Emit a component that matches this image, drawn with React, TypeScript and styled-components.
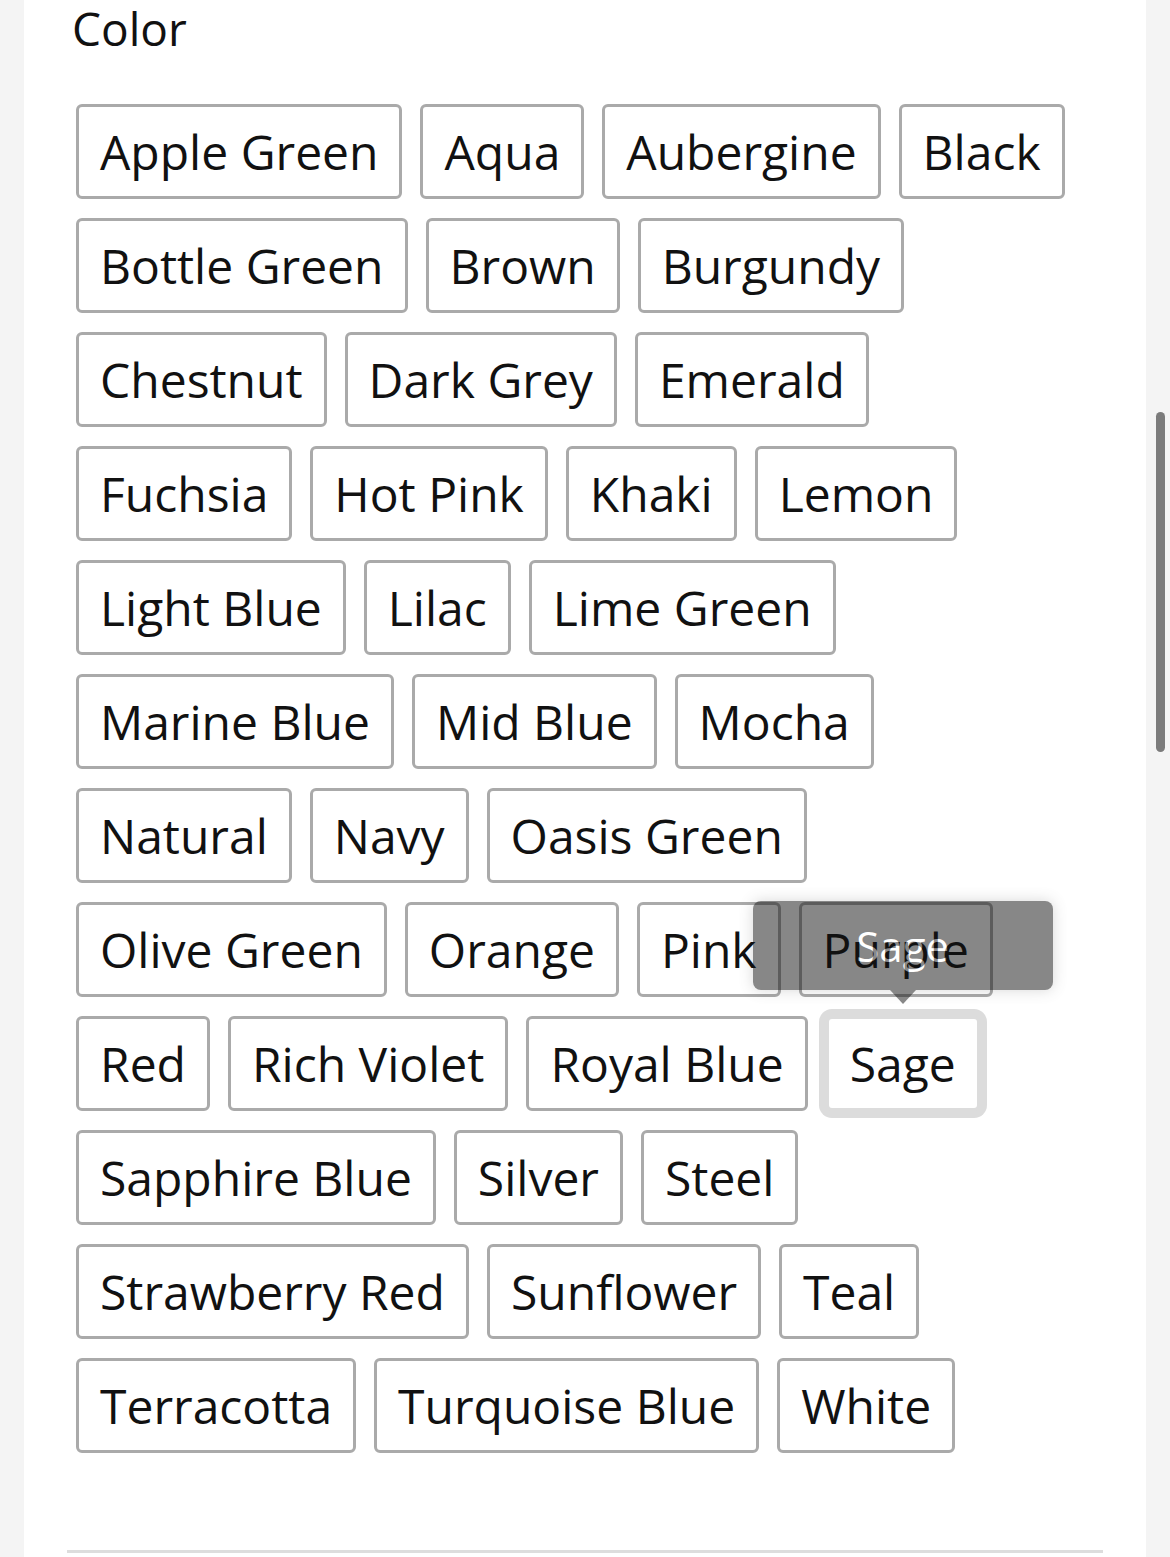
import React from 'react'
import styled, { createGlobalStyle } from 'styled-components'

const colors = [
    'Apple Green', 'Aqua', 'Aubergine', 'Black',
    'Bottle Green', 'Brown', 'Burgundy',
    'Chestnut', 'Dark Grey', 'Emerald',
    'Fuchsia', 'Hot Pink', 'Khaki', 'Lemon',
    'Light Blue', 'Lilac', 'Lime Green',
    'Marine Blue', 'Mid Blue', 'Mocha',
    'Natural', 'Navy', 'Oasis Green',
    'Olive Green', 'Orange', 'Pink', 'Purple',
    'Red', 'Rich Violet', 'Royal Blue', 'Sage',
    'Sapphire Blue', 'Silver', 'Steel',
    'Strawberry Red', 'Sunflower', 'Teal',
    'Terracotta', 'Turquoise Blue', 'White',
]

const selected = 'Sage'

const App = () => (
    <>
        <GlobalStyle />
        <Page>
            <Gutter />
            <Panel>
                <Title>Color</Title>
                <Swatches>
                    {colors.map((color) => (
                        <Option key={color} active={color === selected}>
                            {color}
                            {color === selected && <Tooltip>{color}</Tooltip>}
                        </Option>
                    ))}
                </Swatches>
                <Divider />
            </Panel>
            <Gutter>
                <ScrollThumb />
            </Gutter>
        </Page>
    </>
)

/* Style */
const GlobalStyle = createGlobalStyle`
    html, body {
        margin: 0;
        padding: 0;
        background: #f4f4f4;
    }
    body {
        font-family: "Open Sans", "Noto Sans", sans-serif;
        color: #111;
    }
`
const Page = styled.div`
    display: flex;
    width: 1170px;
    height: 1557px;
    overflow: hidden;
    background: #f4f4f4;
`
const Gutter = styled.div`
    width: 24px;
    flex-shrink: 0;
    display: flex;
    justify-content: center;
    padding-left: 4px;
    box-sizing: border-box;
`
const ScrollThumb = styled.div`
    width: 9px;
    height: 340px;
    margin-top: 412px;
    border-radius: 5px;
    background: #7b7b7b;
`
const Panel = styled.div`
    flex: 1;
    background: #fff;
    padding: 0 0 0 52px;
    display: flex;
    flex-direction: column;
`
const Title = styled.h2`
    margin: 0 0 0 -4px;
    padding-top: 1px;
    font-size: 46px;
    font-weight: 500;
    line-height: 54px;
    color: #111;
`
const Swatches = styled.div`
    display: flex;
    flex-wrap: wrap;
    gap: 19px 18px;
    width: 1010px;
    margin-top: 49px;
`
const Option = styled.div<{ active?: boolean }>`
    position: relative;
    display: inline-flex;
    align-items: center;
    box-sizing: border-box;
    height: 95px;
    padding: 0 21px;
    border: 3px solid ${(p) => (p.active ? '#dcdcdc' : '#aaa')};
    border-radius: 6px;
    box-shadow: ${(p) => (p.active ? '0 0 0 7px #dcdcdc' : 'none')};
    background: #fff;
    font-size: 48px;
    line-height: 1;
    color: #111;
    white-space: nowrap;
    cursor: pointer;
`
const Tooltip = styled.div`
    position: absolute;
    left: 50%;
    bottom: calc(100% + 29px);
    transform: translateX(-50%);
    width: 300px;
    height: 89px;
    display: flex;
    align-items: center;
    justify-content: center;
    border-radius: 8px;
    background: #111;
    color: #fff;
    font-size: 42px;
    opacity: 0.5;
    box-shadow: 0 0 14px rgba(0, 0, 0, 0.3);
    z-index: 2;

    &::after {
        content: '';
        position: absolute;
        top: 100%;
        left: 50%;
        margin-left: -13px;
        border-left: 13px solid transparent;
        border-right: 13px solid transparent;
        border-top: 14px solid #111;
    }
`
const Divider = styled.div`
    height: 3px;
    width: 1036px;
    margin: 97px 0 0 -9px;
    background: #ddd;
`

export default App
